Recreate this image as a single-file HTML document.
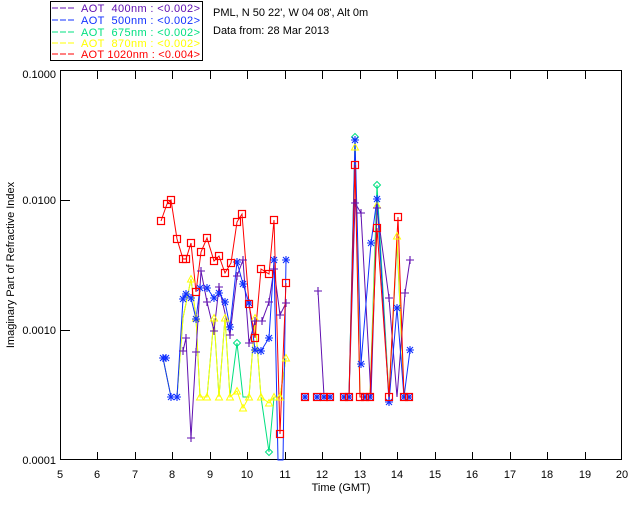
<!DOCTYPE html>
<html><head><meta charset="utf-8"><style>
body{margin:0;background:#fff;width:640px;height:512px;overflow:hidden}
svg text{font-family:"Liberation Sans",sans-serif;font-size:11px;white-space:pre}
</style></head><body>
<svg width="640" height="512" viewBox="0 0 640 512" xmlns="http://www.w3.org/2000/svg">
<defs>
<g id="sq"><rect x="-3.5" y="-3.5" width="7" height="7" fill="none" stroke="#f00" stroke-width="1.2"/></g>
<g id="st" stroke="#1030ff" stroke-width="1.1"><path d="M-4 0H4M0-4V4M-3-3L3 3M-3 3L3-3"/></g>
<g id="pl" stroke="#6010b0" stroke-width="1.1"><path d="M-4 0H4M0-4V4"/></g>
<g id="dm"><path d="M0-3.5L3.5 0 0 3.5-3.5 0Z" fill="none" stroke="#00e080" stroke-width="1"/></g>
<g id="tr"><path d="M0-3.5L3.5 3-3.5 3Z" fill="none" stroke="#ff0" stroke-width="1"/></g>
</defs>
<!-- legend -->
<rect x="50.5" y="1.5" width="152" height="59" fill="none" stroke="#000"/>
<g font-size="11">
<line x1="52" y1="8" x2="74" y2="8" stroke="#6010b0" stroke-dasharray="6,2"/><text x="81" y="12" fill="#6010b0" textLength="119" lengthAdjust="spacing">AOT  400nm : &lt;0.002&gt;</text>
<line x1="52" y1="20" x2="74" y2="20" stroke="#1030ff" stroke-dasharray="6,2"/><text x="81" y="24" fill="#1030ff" textLength="119" lengthAdjust="spacing">AOT  500nm : &lt;0.002&gt;</text>
<line x1="52" y1="32" x2="74" y2="32" stroke="#00e080" stroke-dasharray="6,2"/><text x="81" y="36" fill="#00e080" textLength="119" lengthAdjust="spacing">AOT  675nm : &lt;0.002&gt;</text>
<line x1="52" y1="43" x2="74" y2="43" stroke="#ff0" stroke-dasharray="6,2"/><text x="81" y="47" fill="#ff0" textLength="119" lengthAdjust="spacing">AOT  870nm : &lt;0.002&gt;</text>
<line x1="52" y1="54" x2="74" y2="54" stroke="#f00" stroke-dasharray="6,2"/><text x="81" y="58" fill="#f00" textLength="119" lengthAdjust="spacing">AOT 1020nm : &lt;0.004&gt;</text>
</g>
<text x="213" y="16">PML, N 50 22', W 04 08', Alt 0m</text>
<text x="213" y="34">Data from: 28 Mar 2013</text>
<!-- axes -->
<rect x="60.5" y="70.5" width="561" height="389" fill="none" stroke="#000"/>
<g stroke="#000">
<path d="M61 200.5H70M61 330.5H70M61 70.5H70"/>
<path d="M97.5 460V452M135.5 460V452M172.5 460V452M210.5 460V452M247.5 460V452M285.5 460V452M322.5 460V452M360.5 460V452M397.5 460V452M435.5 460V452M472.5 460V452M510.5 460V452M547.5 460V452M585.5 460V452"/>
<path d="M97.5 71V79M135.5 71V79M172.5 71V79M210.5 71V79M247.5 71V79M285.5 71V79M322.5 71V79M360.5 71V79M397.5 71V79M435.5 71V79M472.5 71V79M510.5 71V79M547.5 71V79M585.5 71V79"/>
</g>
<g text-anchor="end"><text x="56" y="78">0.1000</text><text x="56" y="204">0.0100</text><text x="56" y="334">0.0010</text><text x="56" y="464">0.0001</text></g>
<g text-anchor="middle">
<text x="60" y="478">5</text><text x="97" y="478">6</text><text x="135" y="478">7</text><text x="172" y="478">8</text><text x="210" y="478">9</text><text x="247" y="478">10</text><text x="285" y="478">11</text><text x="322" y="478">12</text><text x="360" y="478">13</text><text x="397" y="478">14</text><text x="435" y="478">15</text><text x="472" y="478">16</text><text x="510" y="478">17</text><text x="547" y="478">18</text><text x="585" y="478">19</text><text x="622" y="478">20</text>
<text x="341" y="491">Time (GMT)</text>
<text transform="translate(14,265) rotate(-90)">Imaginary Part of Refractive Index</text>
</g>
<!-- data -->
<g fill="none" stroke-width="1">
<polyline stroke="#00e080" points="163,358 171,397 177,397 183,318 191,279 196,318 200,397 207,397 214,318 219,397 225,318 230,397 237,343 243,397 249,397 255,318 261,397 269,452 274,397 280,397 286,358"/>
<polyline stroke="#ff0" points="163,358 171,397 177,397 183,318 191,279 196,318 200,397 207,397 214,318 219,397 225,318 230,397 237,391 243,408 249,397 255,318 261,397 269,403 274,397 280,397 286,358"/>
<polyline stroke="#6010b0" points="183,351 186,338 191,438 196,352 201,271 207,302 214,331 219,287 230,335 237,276 243,260 249,343 255,321 262,321 269,302 274,269 280,315 286,303"/>
<polyline stroke="#1030ff" points="163,358 171,397 177,397 183,299 186,294 191,298 196,319 200,288 207,288 214,298 219,293 225,302 230,327 237,262 243,284 249,303 255,350 261,351 269,338 274,260 278,460 283,460 286,260"/>
<polyline stroke="#f00" points="161,221 167,204 171,200 177,239 183,259 186,259 191,243 196,292 201,252 207,238 214,261 219,256 225,273 231,263 237,222 242,214 249,304 255,338 261,269 269,274 274,220 280,434 286,283"/>
<polyline stroke="#6010b0" points="318,291 324,396"/>
<polyline stroke="#00e080" points="349,397 355,137 360,397 365,397 370,397 377,185 389,397 397,242 404,397 409,397"/>
<polyline stroke="#ff0" points="349,397 355,147 360,397 370,397 377,205 389,397 397,236 404,397 409,397"/>
<polyline stroke="#6010b0" points="349,397 355,203 361,213 371,397 377,208 389,298 397,397 405,293 410,260"/>
<polyline stroke="#1030ff" points="349,397 355,140 361,364 371,243 377,199 389,402 397,308 404,397 410,350"/>
<polyline stroke="#f00" points="349,397 355,165 360,397 365,397 370,397 377,228 389,397 398,217 404,397 409,397"/>
</g>
<g>
<use href="#tr" x="191" y="279"/><use href="#tr" x="196" y="318"/><use href="#tr" x="214" y="318"/><use href="#tr" x="225" y="318"/><use href="#tr" x="255" y="318"/><use href="#tr" x="237" y="391"/><use href="#tr" x="243" y="408"/><use href="#tr" x="269" y="403"/><use href="#tr" x="286" y="358"/>
<use href="#tr" x="200" y="397"/><use href="#tr" x="207" y="397"/><use href="#tr" x="219" y="397"/><use href="#tr" x="230" y="397"/><use href="#tr" x="249" y="397"/><use href="#tr" x="261" y="397"/><use href="#tr" x="274" y="397"/><use href="#tr" x="280" y="397"/>
<use href="#dm" x="237" y="343"/><use href="#dm" x="269" y="452"/><use href="#dm" x="355" y="137"/><use href="#dm" x="377" y="185"/><use href="#tr" x="355" y="147"/><use href="#tr" x="377" y="205"/><use href="#tr" x="397" y="236"/>
<use href="#st" x="163" y="358"/><use href="#st" x="166" y="358"/><use href="#st" x="171" y="397"/><use href="#st" x="177" y="397"/><use href="#st" x="183" y="299"/><use href="#st" x="186" y="294"/><use href="#st" x="191" y="298"/><use href="#st" x="196" y="319"/><use href="#st" x="200" y="288"/><use href="#st" x="207" y="288"/><use href="#st" x="214" y="298"/><use href="#st" x="219" y="293"/><use href="#st" x="225" y="302"/><use href="#st" x="230" y="327"/><use href="#st" x="237" y="262"/><use href="#st" x="243" y="284"/><use href="#st" x="249" y="303"/><use href="#st" x="255" y="350"/><use href="#st" x="261" y="351"/><use href="#st" x="269" y="338"/><use href="#st" x="274" y="260"/><use href="#st" x="286" y="260"/>
<use href="#st" x="355" y="140"/><use href="#st" x="361" y="364"/><use href="#st" x="371" y="243"/><use href="#st" x="377" y="199"/><use href="#st" x="389" y="402"/><use href="#st" x="397" y="308"/><use href="#st" x="410" y="350"/>
<use href="#pl" x="183" y="351"/><use href="#pl" x="186" y="338"/><use href="#pl" x="191" y="438"/><use href="#pl" x="196" y="352"/><use href="#pl" x="201" y="271"/><use href="#pl" x="207" y="302"/><use href="#pl" x="214" y="331"/><use href="#pl" x="219" y="287"/><use href="#pl" x="230" y="335"/><use href="#pl" x="237" y="276"/><use href="#pl" x="243" y="260"/><use href="#pl" x="249" y="343"/><use href="#pl" x="255" y="321"/><use href="#pl" x="262" y="321"/><use href="#pl" x="269" y="302"/><use href="#pl" x="274" y="269"/><use href="#pl" x="280" y="315"/><use href="#pl" x="286" y="303"/>
<use href="#pl" x="318" y="291"/><use href="#pl" x="355" y="203"/><use href="#pl" x="361" y="213"/><use href="#pl" x="377" y="208"/><use href="#pl" x="389" y="298"/><use href="#pl" x="405" y="293"/><use href="#pl" x="410" y="260"/>
<use href="#sq" x="161" y="221"/><use href="#sq" x="167" y="204"/><use href="#sq" x="171" y="200"/><use href="#sq" x="177" y="239"/><use href="#sq" x="183" y="259"/><use href="#sq" x="186" y="259"/><use href="#sq" x="191" y="243"/><use href="#sq" x="196" y="292"/><use href="#sq" x="201" y="252"/><use href="#sq" x="207" y="238"/><use href="#sq" x="214" y="261"/><use href="#sq" x="219" y="256"/><use href="#sq" x="225" y="273"/><use href="#sq" x="231" y="263"/><use href="#sq" x="237" y="222"/><use href="#sq" x="242" y="214"/><use href="#sq" x="249" y="304"/><use href="#sq" x="255" y="338"/><use href="#sq" x="261" y="269"/><use href="#sq" x="269" y="274"/><use href="#sq" x="274" y="220"/><use href="#sq" x="280" y="434"/><use href="#sq" x="286" y="283"/>
<use href="#st" x="305" y="397"/><use href="#st" x="317" y="397"/><use href="#st" x="324" y="397"/><use href="#st" x="330" y="397"/><use href="#st" x="344" y="397"/><use href="#st" x="349" y="397"/><use href="#st" x="365" y="397"/><use href="#st" x="370" y="397"/><use href="#st" x="404" y="397"/><use href="#st" x="409" y="397"/>
<use href="#sq" x="305" y="397"/><use href="#sq" x="317" y="397"/><use href="#sq" x="324" y="397"/><use href="#sq" x="330" y="397"/><use href="#sq" x="344" y="397"/><use href="#sq" x="349" y="397"/><use href="#sq" x="355" y="165"/><use href="#sq" x="360" y="397"/><use href="#sq" x="365" y="397"/><use href="#sq" x="370" y="397"/><use href="#sq" x="377" y="228"/><use href="#sq" x="389" y="397"/><use href="#sq" x="398" y="217"/><use href="#sq" x="404" y="397"/><use href="#sq" x="409" y="397"/>
</g>
</svg>
</body></html>
